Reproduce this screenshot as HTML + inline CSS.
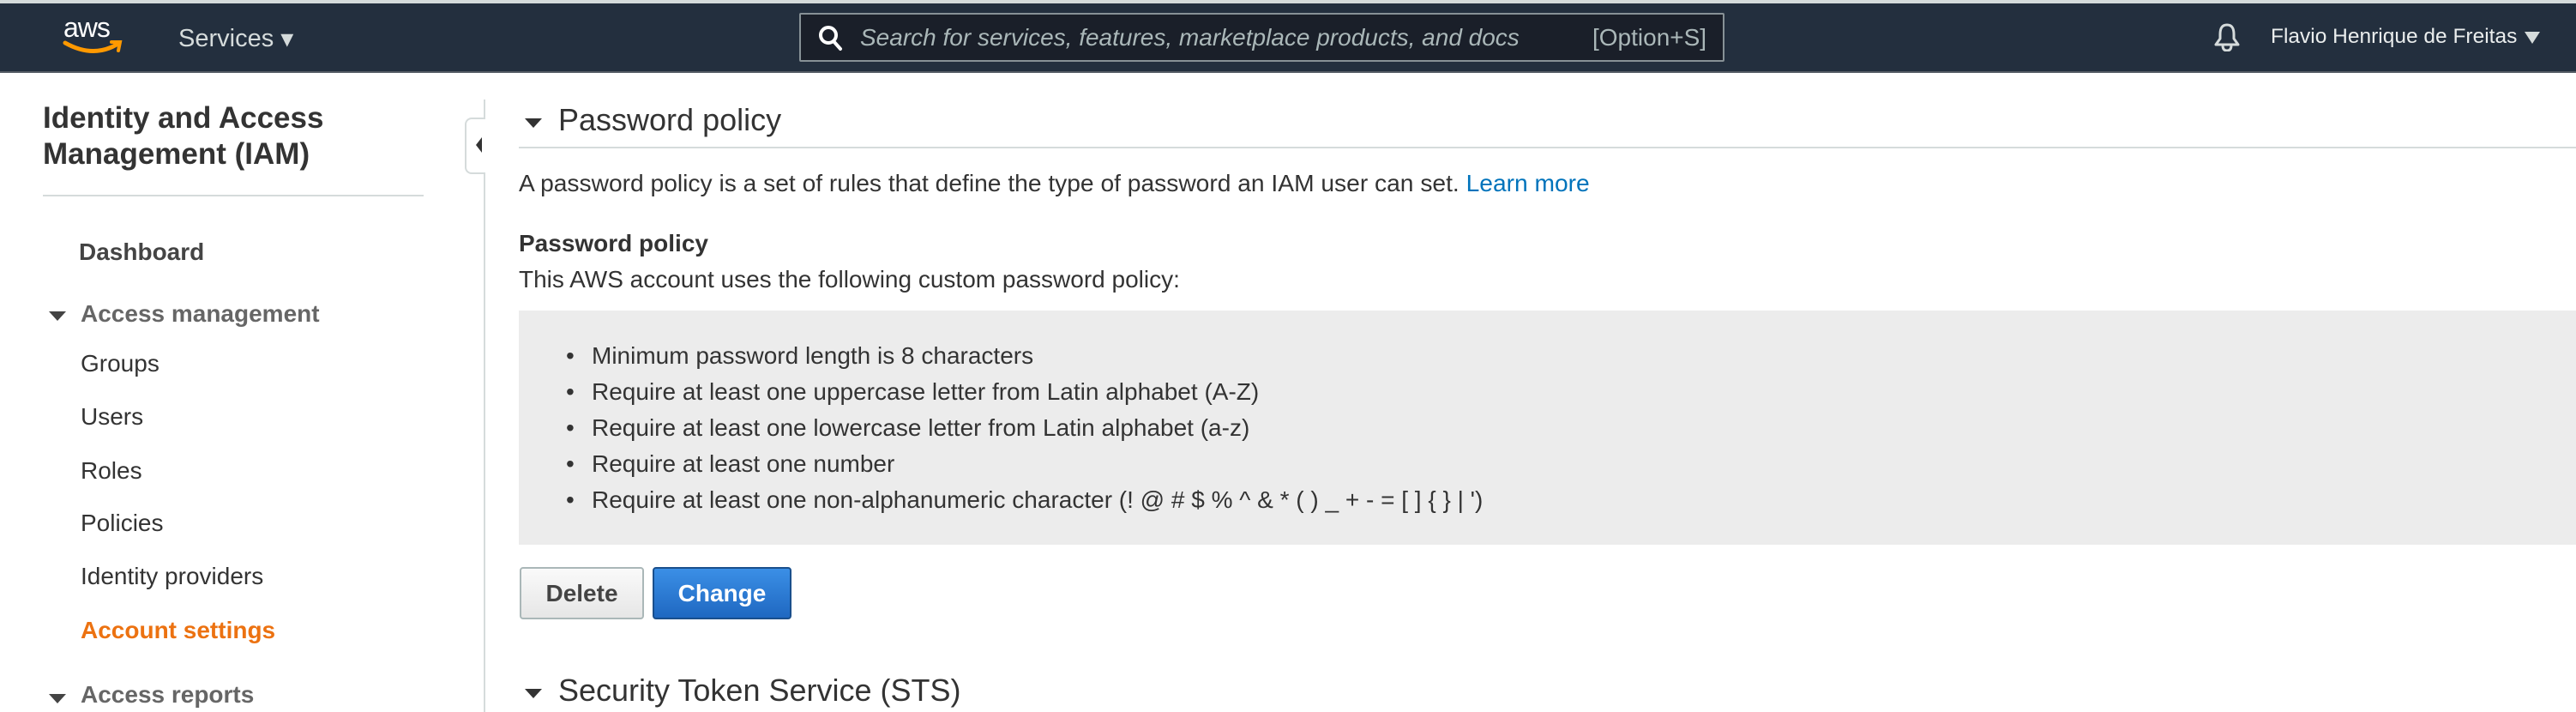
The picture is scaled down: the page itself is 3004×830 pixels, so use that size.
<!DOCTYPE html>
<html><head><meta charset="utf-8"><style>
*{margin:0;padding:0;box-sizing:border-box}
body{width:3004px;height:830px;overflow:hidden;background:#fff;font-family:"Liberation Sans",Arial,sans-serif;color:#333;position:relative}
.a{position:absolute;white-space:nowrap}
.top{position:absolute;left:0;top:0;width:3004px;height:85px;background:#232f3e;border-top:4px solid #d5dbdb;border-bottom:2px solid #545b64}
.nav{font-size:28px;color:#666}
.tri{display:inline-block;width:0;height:0;border-left:10px solid transparent;border-right:10px solid transparent;border-top:11px solid #444}
.li{font-size:28px;color:#333}
</style></head><body>
<div class="top"></div>
<div class="a" style="left:74px;top:14px;font-size:32px;color:#fff;letter-spacing:-1px">aws</div>
<svg class="a" style="left:72px;top:46px" width="72" height="20" viewBox="0 0 72 20"><path d="M4 4 Q36 22 64 6" stroke="#f90" stroke-width="5" fill="none" stroke-linecap="round"/><path d="M58 3 L68 3 L66 13" stroke="#f90" stroke-width="4" fill="none" stroke-linecap="round"/></svg>
<div class="a" style="left:208px;top:27px;font-size:29px;color:#d5dbdb">Services <span style="font-size:30px;position:relative;top:1px">▾</span></div>
<div class="a" style="left:932px;top:15px;width:1079px;height:57px;background:#1a1f29;border:2px solid #879196;border-radius:2px"></div>
<svg class="a" style="left:954px;top:29px" width="30" height="32" viewBox="0 0 30 32"><circle cx="12" cy="12" r="9" stroke="#fff" stroke-width="4" fill="none"/><path d="M18 19 L26 28" stroke="#fff" stroke-width="4" stroke-linecap="round"/></svg>
<div class="a" style="left:1003px;top:28px;font-size:28px;font-style:italic;color:#aab7b8">Search for services, features, marketplace products, and docs</div>
<div class="a" style="left:1857px;top:28px;font-size:28px;color:#aab7b8">[Option+S]</div>
<svg class="a" style="left:2582px;top:26px" width="30" height="34" viewBox="0 0 30 34"><path d="M15 3 C8 3 7 9 7 14 L7 19 L2 26 L28 26 L23 19 L23 14 C23 9 22 3 15 3 Z" stroke="#d5dbdb" stroke-width="3" fill="none" stroke-linejoin="round"/><path d="M10 27 Q10 33 15 33 Q20 33 20 27" stroke="#d5dbdb" stroke-width="3" fill="none"/></svg>
<div class="a" style="left:2648px;top:29px;font-size:24.5px;color:#eaeded">Flavio Henrique de Freitas</div>
<div class="a" style="left:2944px;top:37px;width:0;height:0;border-left:9px solid transparent;border-right:9px solid transparent;border-top:14px solid #d5dbdb"></div>

<div class="a" style="left:50px;top:117px;font-size:35px;font-weight:bold;color:#333;line-height:42px">Identity and Access<br>Management (IAM)</div>
<div class="a" style="left:50px;top:227px;width:444px;height:2px;background:#d5dbdb"></div>
<div class="a nav" style="left:92px;top:278px;font-weight:bold;color:#444">Dashboard</div>
<div class="a" style="left:57px;top:361px"><span class="tri"></span></div>
<div class="a nav" style="left:94px;top:350px;font-weight:bold">Access management</div>
<div class="a li" style="left:94px;top:408px">Groups</div>
<div class="a li" style="left:94px;top:470px">Users</div>
<div class="a li" style="left:94px;top:533px">Roles</div>
<div class="a li" style="left:94px;top:594px">Policies</div>
<div class="a li" style="left:94px;top:656px">Identity providers</div>
<div class="a li" style="left:94px;top:719px;font-weight:bold;color:#ec7211">Account settings</div>
<div class="a" style="left:57px;top:807px"><span class="tri"></span></div>
<div class="a nav" style="left:94px;top:794px;font-weight:bold">Access reports</div>

<div class="a" style="left:564px;top:116px;width:2px;height:714px;background:#d5dbdb"></div>
<div class="a" style="left:542px;top:137px;width:24px;height:66px;background:#fff;border:2px solid #d5dbdb;border-right:none;border-radius:8px 0 0 8px"></div>
<div class="a" style="left:555px;top:160px;width:0;height:0;border-top:9px solid transparent;border-bottom:9px solid transparent;border-right:7px solid #333"></div>

<div class="a" style="left:612px;top:136px"><span class="tri" style="border-top-color:#333"></span></div>
<div class="a" style="left:651px;top:119px;font-size:36px;color:#333">Password policy</div>
<div class="a" style="left:605px;top:171px;width:2399px;height:2px;background:#d5dbdb"></div>
<div class="a li" style="left:605px;top:197px;font-size:28.2px">A password policy is a set of rules that define the type of password an IAM user can set. <span style="color:#0073bb">Learn more</span></div>
<div class="a li" style="left:605px;top:268px;font-weight:bold">Password policy</div>
<div class="a li" style="left:605px;top:310px">This AWS account uses the following custom password policy:</div>
<div class="a" style="left:605px;top:362px;width:2399px;height:273px;background:#ececec"></div>
<div class="a li" style="left:660px;top:394px;line-height:42px">•<br>•<br>•<br>•<br>•</div>
<div class="a li" style="left:690px;top:394px;line-height:42px">Minimum password length is 8 characters<br>Require at least one uppercase letter from Latin alphabet (A-Z)<br>Require at least one lowercase letter from Latin alphabet (a-z)<br>Require at least one number<br>Require at least one non-alphanumeric character (! @ # $ % ^ &amp; * ( ) _ + - = [ ] { } | ')</div>
<div class="a" style="left:606px;top:661px;width:145px;height:61px;border:2px solid #aab7b8;border-radius:4px;background:linear-gradient(#fafafa,#e6e6e6);font-size:28px;font-weight:bold;color:#444;text-align:center;line-height:57px">Delete</div>
<div class="a" style="left:761px;top:661px;width:162px;height:61px;border:2px solid #1a4f8c;border-radius:4px;background:linear-gradient(#3b8fe6,#1f68c1);font-size:28px;font-weight:bold;color:#fff;text-align:center;line-height:57px">Change</div>
<div class="a" style="left:612px;top:801px"><span class="tri" style="border-top-color:#333"></span></div>
<div class="a" style="left:651px;top:784px;font-size:36px;color:#333">Security Token Service (STS)</div>
</body></html>
